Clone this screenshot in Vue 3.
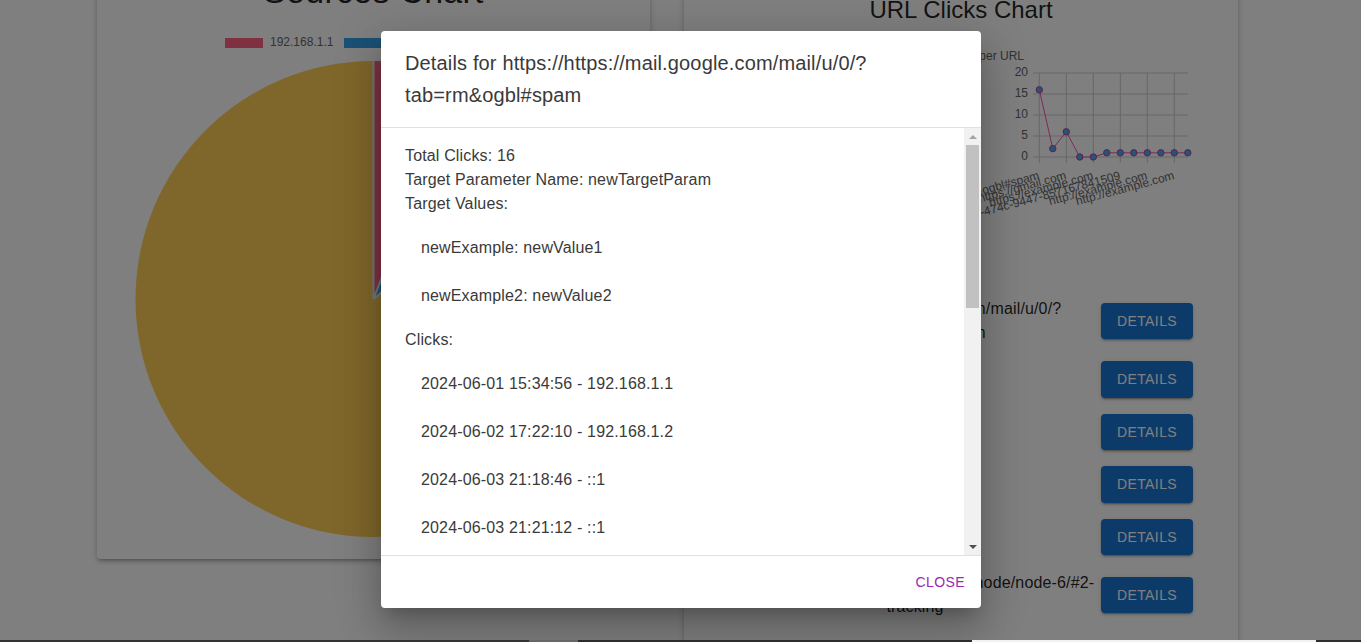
<script setup>
const legend = [
  { x: 225, w: 38, color: '#ff6384', label: '192.168.1.1', tx: 270 },
  { x: 344, w: 38, color: '#36a2eb', label: '::1', tx: 389 },
]
const values = [16, 2, 6, 0, 0, 1, 1, 1, 1, 1, 1, 1]
const px = (i) => 1039.3 + i * 13.5
const py = (v) => 157 - v * 4.2
const linePoints = values.map((v, i) => `${px(i)},${py(v)}`).join(' ')
const yTicks = [20, 15, 10, 5, 0]
const xLabels = [
  { x: 1040, text: 'https://https://mail.google.com/mail/u/0/?tab=rm&ogbl#spam' },
  { x: 1067, text: 'https://gmail.com' },
  { x: 1094, text: 'https://example.com' },
  { x: 1121, text: 'a1b2c3d4-474c-9447-857167841509' },
  { x: 1148, text: 'http://example.com' },
  { x: 1175, text: 'http://example.com' },
]
const rows = [
  'https://https://mail.google.com/mail/u/0/?tab=rm&ogbl#spam',
  'gmail.com',
  'example.com',
  'example.com',
  'example.com',
  'https://https://docs.example.com/node/node-6/#2-tracking',
]
const targets = ['newExample: newValue1', 'newExample2: newValue2']
const clicks = [
  '2024-06-01 15:34:56 - 192.168.1.1',
  '2024-06-02 17:22:10 - 192.168.1.2',
  '2024-06-03 21:18:46 - ::1',
  '2024-06-03 21:21:12 - ::1',
]
</script>

<template>
  <div class="shell">
    <div class="viewport">
      <div class="page">
        <section class="card card-left">
          <h1 class="title-large">Sources Chart</h1>
          <svg class="pie" viewBox="97 12 553 535" width="553" height="535">
            <g v-for="item in legend" :key="item.label">
              <rect :x="item.x" y="38" :width="item.w" height="10" :fill="item.color" />
              <text :x="item.tx" y="46" class="axis">{{ item.label }}</text>
            </g>
            <circle cx="373.5" cy="299" r="238" fill="#ffce56" />
            <path d="M373.5 299 L373.5 61 A238 238 0 0 1 458.8 76.8 Z" fill="#ff6384" />
            <path d="M373.5 299 L458.8 76.8 A238 238 0 0 1 555.8 146 Z" fill="#36a2eb" />
            <path d="M373.5 299 L373.5 61 M373.5 299 L458.8 76.8 M373.5 299 L555.8 146" stroke="#e4eef4" stroke-width="2" fill="none" />
          </svg>
        </section>

        <section class="card card-right">
          <h2 class="title-small">URL Clicks Chart</h2>
          <svg class="line" viewBox="684 26 554 263" width="554" height="263">
            <text x="1024" y="60" text-anchor="end" class="axis">Clicks per URL</text>
            <line v-for="t in yTicks" :key="t" x1="1033" x2="1188" :y1="py(t)" :y2="py(t)" class="grid" />
            <line v-for="i in 6" :key="i" :x1="px((i - 1) * 2)" :x2="px((i - 1) * 2)" y1="73" y2="163" class="grid" />
            <text v-for="t in yTicks" :key="'y' + t" x="1028" :y="py(t) + 3" text-anchor="end" class="axis">{{ t }}</text>
            <polyline :points="linePoints" fill="none" stroke="#ff4fb0" stroke-width="1" />
            <circle v-for="(v, i) in values" :key="'p' + i" :cx="px(i)" :cy="py(v)" r="3.2" fill="#4ba8ec" stroke="#c040a0" stroke-width="1" />
            <text
              v-for="l in xLabels"
              :key="l.x"
              :transform="`translate(${l.x} 179) rotate(-15)`"
              text-anchor="end"
              class="axis"
            >{{ l.text }}</text>
          </svg>
          <ul class="rows">
            <li v-for="(row, i) in rows" :key="i" class="row">
              <span class="row-text">{{ row }}</span>
              <button class="details" type="button">DETAILS</button>
            </li>
          </ul>
        </section>
      </div>

      <div class="overlay">
        <div class="dialog">
          <h2 class="dialog-title">Details for https://https://mail.google.com/mail/u/0/?tab=rm&amp;ogbl#spam</h2>
          <div class="content-wrap">
            <div class="dialog-content">
              <p class="line-text">Total Clicks: 16</p>
              <p class="line-text">Target Parameter Name: newTargetParam</p>
              <p class="line-text">Target Values:</p>
              <ul class="value-list">
                <li v-for="t in targets" :key="t">{{ t }}</li>
              </ul>
              <p class="line-text">Clicks:</p>
              <ul class="value-list">
                <li v-for="c in clicks" :key="c">{{ c }}</li>
              </ul>
            </div>
            <div class="scrollbar">
              <span class="sb-button">
                <svg width="8" height="4" viewBox="0 0 8 4"><path d="M4 0 L8 4 L0 4 Z" fill="#a3a3a3" /></svg>
              </span>
              <div class="sb-track"><div class="sb-thumb"></div></div>
              <span class="sb-button">
                <svg width="8" height="4" viewBox="0 0 8 4"><path d="M0 0 L8 0 L4 4 Z" fill="#505050" /></svg>
              </span>
            </div>
          </div>
          <div class="dialog-actions">
            <button class="close" type="button">CLOSE</button>
          </div>
        </div>
      </div>
    </div>
    <div class="taskbar">
      <span class="seg seg-a"></span>
      <span class="seg seg-b"></span>
      <span class="seg seg-c"></span>
      <span class="seg seg-d"></span>
      <span class="seg seg-a2"></span>
    </div>
  </div>
</template>

<style>
html, body { margin: 0; overflow: hidden; background: #fff; }
</style>

<style scoped>
.shell {
  width: 1361px;
  height: 642px;
  display: flex;
  flex-direction: column;
  overflow: hidden;
  font-family: "Liberation Sans", Arial, sans-serif;
  color: rgba(0, 0, 0, 0.87);
}
.viewport {
  position: relative;
  height: 640px;
  overflow: hidden;
  flex: none;
}
.page {
  display: flex;
  align-items: flex-start;
  gap: 34px;
  padding-left: 97px;
  margin-top: -60px;
}
.card {
  background: #fff;
  border-radius: 4px;
  box-shadow: 0 3px 3px -2px rgba(0,0,0,.2), 0 3px 4px rgba(0,0,0,.14), 0 1px 8px rgba(0,0,0,.12);
  flex: none;
}
.card-left { width: 553px; padding: 30px 0 12px; }
.card-right { width: 554px; padding: 54px 0 40px; }
.title-large {
  margin: 0;
  font-size: 34px;
  line-height: 42px;
  font-weight: 400;
  text-align: center;
  letter-spacing: 0.25px;
}
.title-small {
  margin: 0;
  font-size: 24px;
  line-height: 32px;
  font-weight: 400;
  text-align: center;
}
.pie, .line { display: block; }
.axis {
  font-family: "Liberation Sans", Arial, sans-serif;
  font-size: 12px;
  fill: #666;
}
.grid { stroke: #cdcdcd; stroke-width: 1; }
.rows { list-style: none; margin: 0; padding: 0 45px; }
.row {
  display: flex;
  align-items: center;
  padding: 8px 0;
}
.row-text {
  flex: 1;
  min-width: 0;
  text-align: center;
  font-size: 16px;
  line-height: 24px;
  letter-spacing: 0.15px;
}
.details {
  flex: none;
  width: 92px;
  height: 36.5px;
  padding: 0;
  border: 0;
  border-radius: 4px;
  background: #1976d2;
  color: #fff;
  font: 500 14px/1.75 "Liberation Sans", Arial, sans-serif;
  letter-spacing: 0.4px;
  box-shadow: 0 3px 1px -2px rgba(0,0,0,.2), 0 2px 2px rgba(0,0,0,.14), 0 1px 5px rgba(0,0,0,.12);
}
.overlay {
  position: absolute;
  inset: 0;
  display: flex;
  justify-content: center;
  align-items: flex-start;
  padding: 31px 0 0 1px;
  background: rgba(0, 0, 0, 0.5);
}
.dialog {
  width: 600px;
  height: 577px;
  display: flex;
  flex-direction: column;
  background: #fff;
  border-radius: 4px;
  color: #3a3a3a;
  box-shadow: 0 11px 15px -7px rgba(0,0,0,.2), 0 24px 38px 3px rgba(0,0,0,.14), 0 9px 46px 8px rgba(0,0,0,.12);
}
.dialog-title {
  flex: none;
  margin: 0;
  padding: 16px 24px;
  font-size: 20px;
  line-height: 32px;
  font-weight: 400;
  letter-spacing: 0.15px;
  border-bottom: 1px solid #e0e0e0;
}
.content-wrap {
  position: relative;
  flex: 1;
  min-height: 0;
}
.dialog-content {
  height: 100%;
  overflow: hidden;
  padding: 16px 24px;
  box-sizing: border-box;
  font-size: 16px;
  line-height: 24px;
  letter-spacing: 0.15px;
}
.scrollbar {
  position: absolute;
  top: 0;
  right: 0;
  bottom: 0;
  width: 17px;
  display: flex;
  flex-direction: column;
  background: #f1f1f1;
}
.sb-button {
  flex: none;
  height: 17px;
  display: flex;
  align-items: center;
  justify-content: center;
}
.sb-track { flex: 1; min-height: 0; }
.sb-thumb {
  width: 13px;
  height: 163px;
  margin-left: 2px;
  background: #c1c1c1;
}
.line-text { margin: 0; }
.value-list { list-style: none; margin: 0; padding: 8px 0; }
.value-list li { padding: 12px 16px; }
.dialog-actions {
  flex: none;
  display: flex;
  justify-content: flex-end;
  align-items: center;
  height: 52px;
  padding: 0 8px;
  border-top: 1px solid #e0e0e0;
}
.close {
  padding: 6px 8px;
  border: 0;
  background: none;
  color: #9c27b0;
  font: 500 14px/1.75 "Liberation Sans", Arial, sans-serif;
  letter-spacing: 0.4px;
}
.taskbar { display: flex; height: 2px; flex: none; background: #2e2e2e; }
.seg { display: block; height: 2px; }
.seg-a { width: 529px; background: #333; }
.seg-b { width: 49px; background: #666; }
.seg-c { width: 394px; background: #2c2c2c; }
.seg-d { width: 344px; background: #f2f2f2; }
.seg-a2 { flex: 1; background: #2e2e2e; }
</style>
